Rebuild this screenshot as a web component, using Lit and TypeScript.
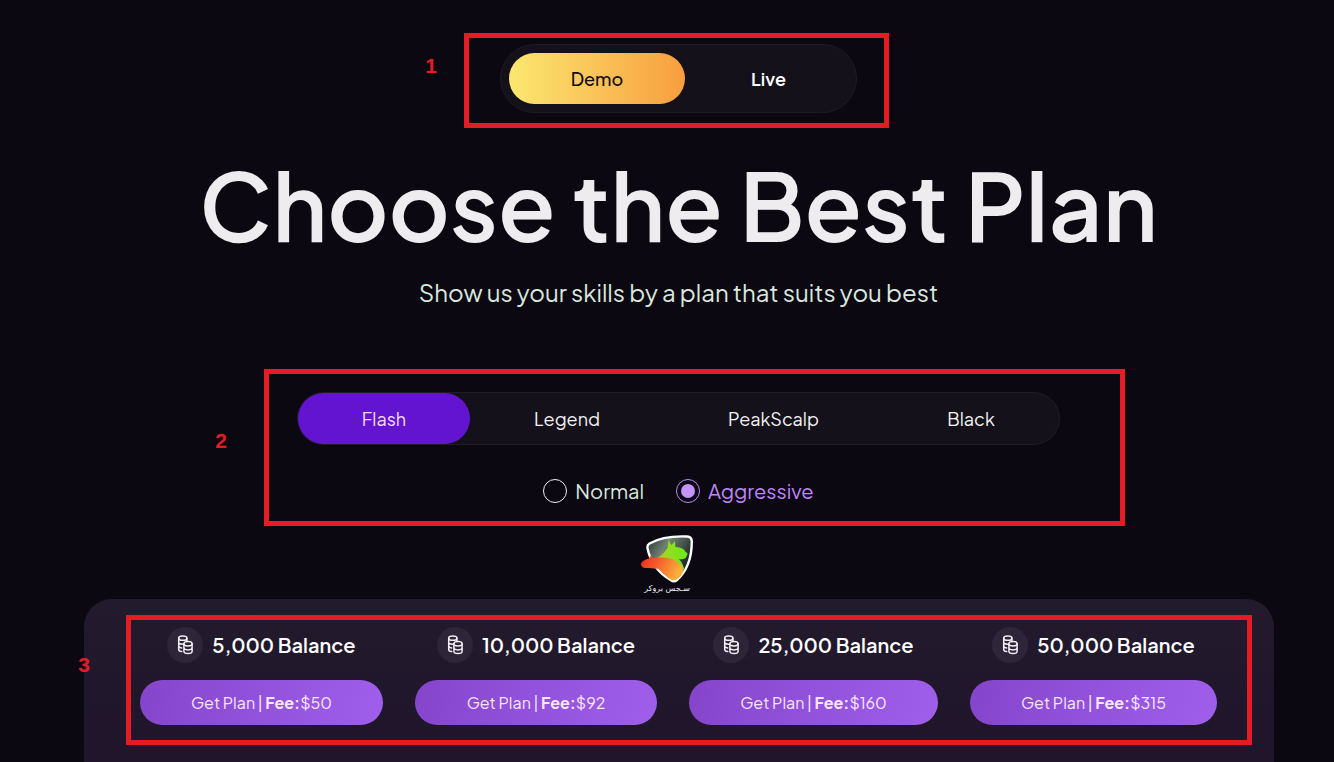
import { LitElement, html, css } from "lit";
import { customElement, property, state } from "lit/decorators.js";

@customElement("coin-badge")
class CoinBadge extends LitElement {
  static styles = css`
    :host { display: flex; align-items: center; justify-content: center; width: 36px; height: 36px; border-radius: 50%; background: #2e2538; }
    svg { display: block; }
  `;
  render() {
    return html`<svg width="18" height="20" viewBox="0 0 18 20" fill="none" stroke="#f3eff7" stroke-width="1.500" stroke-linecap="round" aria-hidden="true">
      <ellipse cx="6.800" cy="3.200" rx="4.100" ry="2.100" />
      <path d="M2.700 3.200v11.200c0 1.100 1.200 1.900 3 2.200M10.900 3.200v3.200M2.700 7c0 1.200 1.700 2.200 4.100 2.200M2.700 10.700c0 1.200 1.300 2 3 2.200" />
      <ellipse cx="12" cy="8.800" rx="4.100" ry="2.200" />
      <path d="M7.900 8.800v7.500c0 1.300 1.800 2.300 4.100 2.300s4.100-1 4.100-2.300V8.800M7.900 12.600c0 1.300 1.800 2.300 4.100 2.300s4.100-1 4.100-2.300" />
    </svg>`;
  }
}

@customElement("broker-logo")
class BrokerLogo extends LitElement {
  static styles = css`
    :host { display: flex; flex-direction: column; align-items: center; }
    svg { display: block; }
    .name { font: 8px/12px "DejaVu Sans", sans-serif; color: #f1eef5; white-space: nowrap; }
  `;
  render() {
    return html`<svg width="54" height="48" viewBox="0 0 54 48" role="img" aria-label="Broker logo">
        <defs>
          <linearGradient id="wolf" x1="0" y1="0" x2="1" y2="0.3">
            <stop offset="0" stop-color="#ea2a1c" /><stop offset=".4" stop-color="#f5592c" /><stop offset="1" stop-color="#fbb03a" />
          </linearGradient>
          <linearGradient id="fox" x1="0" y1="0" x2="1" y2="0">
            <stop offset="0" stop-color="#b9c42e" /><stop offset=".5" stop-color="#8fe01c" /><stop offset="1" stop-color="#6be81c" />
          </linearGradient>
          <linearGradient id="glass" x1="0" y1="0" x2="1" y2="0.6">
            <stop offset="0" stop-color="#2b3036" /><stop offset=".4" stop-color="#6f8474" /><stop offset="1" stop-color="#15171b" />
          </linearGradient>
        </defs>
        <path d="M9.500 8.500C20 2.500 34 1 47 1.500c3.200.2 4.800 2 4.800 5C51.800 22 47 36 37 45c-2 1.700-4 1.700-6 .3C19 38 10 27 7.500 13c-.3-2 .3-3.500 2-4.500z" fill="url(#glass)" stroke="#fff" stroke-width="2.400" />
        <path d="M15 24c5-2 9-6 12.500-11l1-8 2.700 5L35 6.200l.3 5.800c3.500 0 7 1.300 9 3 .8 1.800 2.300 2.300 3.400 3.800l-1.800 4c-2 1.400-4.500 1.600-6.900 1.400 3 3 4.800 6.500 5.400 11C36 28 28 24 15 24z" fill="url(#fox)" />
        <path d="M1 28.500c2-3 4.500-4 7.500-4.700l2.500-3 2 2.200 2-.2c9-.8 17 0 23 4.700 3.500 2.700 5.500 6 5.500 8.500-1.800 4.500-4 7-7.500 8.800-1.800.8-3.600.7-5.300-.3-5-3-9-7.500-12-10.500-5-1-9-1-14-1-2.500-.4-3.700-2-3.700-4.500z" fill="url(#wolf)" />
      </svg>
      <span class="name" lang="fa" dir="rtl">سـجس بروکر</span>`;
  }
}

@customElement("callout-box")
class CalloutBox extends LitElement {
  @property() label = "";
  static styles = css`
    :host { position: absolute; border: 5px solid #e61c24; pointer-events: none; box-sizing: border-box; }
    .num { position: absolute; right: 100%; top: 50%; transform: translateY(-50%); font: bold 21px/24px "Liberation Sans", Arial, sans-serif; color: #e61c24; margin-right: var(--num-gap, 30px); margin-top: var(--num-shift, 0px); }
  `;
  render() {
    return html`<span class="num">${this.label}</span>`;
  }
}

const PLANS = [
  { balance: "5,000", fee: "$50" },
  { balance: "10,000", fee: "$92" },
  { balance: "25,000", fee: "$160" },
  { balance: "50,000", fee: "$315" },
];

@customElement("app-root")
class AppRoot extends LitElement {
  @state() account = "Demo";
  @state() plan = "Flash";
  @state() risk = "Aggressive";

  static styles = css`
    :host { display: block; min-height: 100vh; background: #0b0812; color: #fff; font-family: "Plus Jakarta Sans", Inter, sans-serif; overflow: hidden; }
    * { box-sizing: border-box; }
    button { font: inherit; color: inherit; background: none; border: 0; margin: 0; cursor: pointer; }
    .page { display: flex; flex-direction: column; align-items: center; padding: 44px 0 0 23px; min-height: 100vh; }
    .block { position: relative; }
    .pill { background: #14111a; border: 1px solid #1f1b27; }
    .accounts { display: grid; grid-template-columns: 176fr 159fr; column-gap: 4px; width: 357px; padding: 8px; border-radius: 35px; font-size: 18px; font-weight: 600; line-height: 51px; }
    .accounts button { border-radius: 26px; padding: 0; }
    .accounts .on { background: linear-gradient(90deg, #fbe870, #f89e3e); color: #140b10; font-weight: 500; }
    .c1 { left: -36px; right: -32px; top: -11px; bottom: -15px; --num-gap: 32px; --num-shift: -15px; }
    h1 { margin: 33px 0 0; font-size: 94px; line-height: 116px; font-weight: 600; color: #eeecef; white-space: nowrap; }
    .sub { margin: 14px 0 0; font-size: 24px; line-height: 32px; color: #dbe8df; }
    .options { margin-top: 84px; width: 763px; max-width: 100%; display: flex; flex-direction: column; align-items: center; gap: 34px; }
    .tabs { display: grid; grid-template-columns: 172fr 194fr 219fr 176fr; width: 100%; border-radius: 27px; font-size: 18px; line-height: 51px; }
    .tabs button { padding: 0; border-radius: 26px; color: #f3f1f5; }
    .tabs .on { background: #6314d0; color: #f5dcff; }
    .c2 { left: -33px; right: -65px; top: -23px; bottom: -23px; --num-gap: 42px; --num-shift: -7px; }
    .risks { display: flex; gap: 32px; border: 0; margin: 0; padding: 0; font-size: 20px; line-height: 24px; color: #dbe8df; }
    .risks label { display: flex; align-items: center; gap: 8px; }
    .risks input { appearance: none; width: 24px; height: 24px; margin: 0; border: 1px solid #f0edf3; border-radius: 50%; display: grid; place-items: center; }
    .risks .on { color: #bf87f8; }
    .risks input:checked { border-color: #bf87f8; }
    .risks input:checked::after { content: ""; width: 14px; height: 14px; border-radius: 50%; background: #c493fb; }
    broker-logo { margin: 32px 23px 0 0; }
    .panel { flex: 1; align-self: stretch; margin: 4px 60px 0 61px; padding: 28px 57px 28px 56px; border-radius: 28px 28px 0 0; background: linear-gradient(180deg, #221a2d, #20152b); }
    .plans { display: grid; grid-template-columns: 243fr 242fr 249fr 247fr; column-gap: 32px; }
    .plan { display: flex; flex-direction: column; gap: 17px; }
    .plan h2 { display: flex; align-items: center; justify-content: center; gap: 9px; margin: 0; font-size: 20px; line-height: 36px; font-weight: 600; white-space: nowrap; }
    .buy { padding: 0; height: 45px; border-radius: 23px; background: linear-gradient(100deg, #8545cb, #9f5feb); color: #f8e6ff; font-size: 16px; line-height: 45px; }
    .c3 { left: -14px; right: -35px; top: -12px; bottom: -20px; --num-gap: 41px; --num-shift: -15px; }
  `;

  render() {
    return html`<main class="page">
      <div class="block">
        <div class="accounts pill">
          ${["Demo", "Live"].map((n) => html`<button class=${this.account === n ? "on" : ""} @click=${() => (this.account = n)}>${n}</button>`)}
        </div>
        <callout-box class="c1" label="1"></callout-box>
      </div>
      <h1>Choose the Best Plan</h1>
      <p class="sub">Show us your skills by a plan that suits you best</p>
      <section class="block options">
        <div class="tabs pill">
          ${["Flash", "Legend", "PeakScalp", "Black"].map((n) => html`<button class=${this.plan === n ? "on" : ""} @click=${() => (this.plan = n)}>${n}</button>`)}
        </div>
        <fieldset class="risks" aria-label="Risk profile">
          ${["Normal", "Aggressive"].map((n) => html`<label class=${this.risk === n ? "on" : ""}><input type="radio" name="risk" .checked=${this.risk === n} @change=${() => (this.risk = n)} />${n}</label>`)}
        </fieldset>
        <callout-box class="c2" label="2"></callout-box>
      </section>
      <broker-logo></broker-logo>
      <section class="panel">
        <div class="block plans">
          ${PLANS.map((p) => html`<article class="plan">
            <h2><coin-badge></coin-badge>${p.balance} Balance</h2>
            <button class="buy">Get Plan | <b>Fee:</b>${p.fee}</button>
          </article>`)}
          <callout-box class="c3" label="3"></callout-box>
        </div>
      </section>
    </main>`;
  }
}
